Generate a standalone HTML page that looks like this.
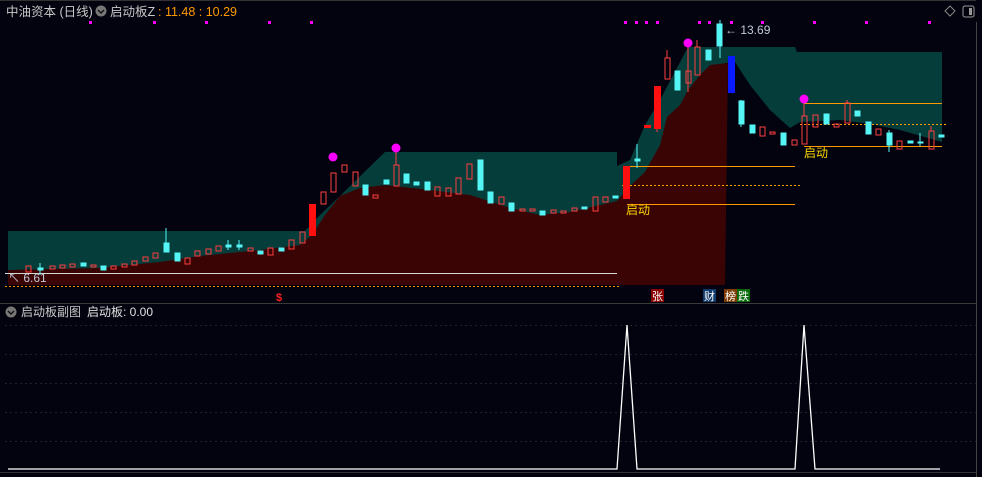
<!DOCTYPE html>
<html><head><meta charset="utf-8"><style>
body{margin:0;background:#03030f;width:982px;height:477px;overflow:hidden;font-family:"Liberation Sans","Noto Sans CJK SC",sans-serif}
svg{display:block}
text{font-family:"Liberation Sans","Noto Sans CJK SC",sans-serif}
</style></head><body>
<svg width="982" height="477" viewBox="0 0 982 477" xmlns="http://www.w3.org/2000/svg">
<rect width="982" height="477" fill="#03030f"/>
<path fill="#053d3b" d="M8 231 L305 231 L320 215 L340 196 L385 152 L617 152 L617 166 L630 160 L645 125 L660 100 L688 47 L795 47 L797 52 L942 52 L942 142 L900 130 L870 124 L840 120 L800 122 L790 128 L770 110 L750 85 L735 62 L725 63 L725 285 L8 285 Z"/>
<path fill="#3a0404" d="M8 270 L100 268 L160 262 L200 256 L260 250 L300 245 L312 235 L325 215 L340 196 L360 188 L385 185 L430 190 L470 195 L510 208 L540 215 L570 212 L600 205 L617 201 L630 186 L645 172 L660 145 L667 117 L680 105 L688 90 L700 75 L710 65 L728 63 L725 285 L8 285 Z"/>
<line x1="5" y1="273.5" x2="617" y2="273.5" stroke="#d8d8d8" stroke-width="1"/>
<line x1="5" y1="286.5" x2="620" y2="286.5" stroke="#ff8c00" stroke-dasharray="2,2"/>
<line x1="627" y1="166.5" x2="795" y2="166.5" stroke="#ff9900"/>
<line x1="622" y1="185.5" x2="800" y2="185.5" stroke="#ff9900" stroke-dasharray="2,2"/>
<line x1="627" y1="204.5" x2="795" y2="204.5" stroke="#ff9900"/>
<line x1="804" y1="103.5" x2="942" y2="103.5" stroke="#ff9900"/>
<line x1="800" y1="124.5" x2="946" y2="124.5" stroke="#ff9900" stroke-dasharray="2,2"/>
<line x1="804" y1="146.5" x2="942" y2="146.5" stroke="#ff9900"/>
<g stroke-width="1">
<g stroke="#ff4040" fill="none">
<rect x="26" y="266" width="5" height="6"/><rect x="50" y="266" width="5" height="3"/><rect x="60" y="265" width="5" height="3"/><rect x="70" y="264" width="5" height="3"/><rect x="91" y="265" width="5" height="2"/><rect x="111" y="266" width="5" height="3"/><rect x="122" y="264" width="5" height="3"/><rect x="132" y="261" width="5" height="4"/><rect x="143" y="257" width="5" height="4"/><rect x="153" y="253" width="5" height="5"/><rect x="185" y="258" width="5" height="6"/><rect x="195" y="251" width="5" height="5"/><rect x="206" y="249" width="5" height="5"/><rect x="216" y="246" width="5" height="5"/><rect x="248" y="248" width="5" height="3"/><rect x="268" y="248" width="5" height="7"/><rect x="289" y="240" width="5" height="9"/><rect x="300" y="232" width="5" height="11"/><rect x="321" y="192" width="5" height="12"/><rect x="331" y="173" width="5" height="19"/><rect x="342" y="165" width="5" height="7"/><rect x="353" y="172" width="5" height="14"/><rect x="373" y="195" width="5" height="3"/><rect x="394" y="165" width="5" height="21"/><rect x="435" y="187" width="5" height="9"/><rect x="446" y="188" width="5" height="8"/><rect x="456" y="178" width="5" height="16"/><rect x="467" y="164" width="5" height="15"/><rect x="499" y="197" width="5" height="7"/><rect x="520" y="209" width="5" height="2"/><rect x="530" y="209" width="5" height="2"/><rect x="551" y="210" width="5" height="3"/><rect x="561" y="211" width="5" height="2"/><rect x="572" y="208" width="5" height="3"/><rect x="593" y="197" width="5" height="14"/><rect x="603" y="197" width="5" height="5"/><rect x="665" y="58" width="5" height="21"/><rect x="686" y="71" width="5" height="12"/><rect x="695" y="47" width="5" height="28"/><rect x="760" y="127" width="5" height="9"/><rect x="770" y="132" width="5" height="2"/><rect x="792" y="140" width="5" height="5"/><rect x="802" y="116" width="5" height="28"/><rect x="813" y="115" width="5" height="12"/><rect x="834" y="124" width="5" height="3"/><rect x="845" y="103" width="5" height="20"/><rect x="876" y="129" width="5" height="6"/><rect x="897" y="141" width="5" height="8"/><rect x="929" y="131" width="5" height="18"/>
<path d="M396 145V165M688 47V92M804 99V116M847 100V103M667 50V58M657 86V132M697 40V47M931 126V131"/>
</g>
<g fill="#55f5f5" stroke="#55f5f5">
<rect x="38" y="268" width="5" height="2"/><rect x="81" y="263" width="5" height="3"/><rect x="101" y="266" width="5" height="4"/><rect x="164" y="243" width="5" height="9"/><rect x="175" y="253" width="5" height="8"/><rect x="226" y="245" width="5" height="2"/><rect x="237" y="245" width="5" height="2"/><rect x="258" y="251" width="5" height="3"/><rect x="279" y="248" width="5" height="3"/><rect x="363" y="185" width="5" height="10"/><rect x="384" y="180" width="5" height="4"/><rect x="404" y="174" width="5" height="9"/><rect x="414" y="182" width="5" height="3"/><rect x="425" y="182" width="5" height="8"/><rect x="478" y="160" width="5" height="30"/><rect x="488" y="192" width="5" height="11"/><rect x="509" y="203" width="5" height="8"/><rect x="540" y="211" width="5" height="4"/><rect x="582" y="207" width="5" height="2"/><rect x="613" y="196" width="5" height="2"/><rect x="635" y="159" width="5" height="2"/><rect x="675" y="71" width="5" height="19"/><rect x="706" y="50" width="5" height="10"/><rect x="717" y="24" width="5" height="22"/><rect x="739" y="101" width="5" height="23"/><rect x="750" y="125" width="5" height="8"/><rect x="781" y="133" width="5" height="12"/><rect x="824" y="114" width="5" height="10"/><rect x="855" y="111" width="5" height="5"/><rect x="866" y="122" width="5" height="12"/><rect x="887" y="133" width="5" height="12"/><rect x="908" y="141" width="5" height="2"/><rect x="918" y="142" width="5" height="1"/><rect x="939" y="135" width="5" height="2"/>
<path d="M166 228V243M637 144V168M720 20V58M741 100V127M228 240V250M239 240V250M40 263V275M889 130V152M920 133V146"/>
</g>
<rect x="309" y="204" width="7" height="32" fill="#ff1010"/>
<rect x="623" y="166" width="7" height="33" fill="#ff1010"/>
<rect x="654" y="86" width="7" height="43" fill="#ff1010"/>
<rect x="644" y="125" width="7" height="3" fill="#ff1010"/>
<rect x="728" y="56" width="7" height="37" fill="#0a1aff"/>
</g>
<g fill="#ff00ff">
<circle cx="333" cy="157" r="4.5"/><circle cx="396" cy="148" r="4.5"/><circle cx="688" cy="43" r="4.5"/><circle cx="804" cy="99" r="4.5"/>
<rect x="89" y="21" width="3" height="3"/><rect x="153" y="21" width="3" height="3"/><rect x="205" y="21" width="3" height="3"/><rect x="268" y="21" width="3" height="3"/><rect x="310" y="21" width="3" height="3"/><rect x="624" y="21" width="3" height="3"/><rect x="635" y="21" width="3" height="3"/><rect x="645" y="21" width="3" height="3"/><rect x="656" y="21" width="3" height="3"/><rect x="698" y="21" width="3" height="3"/><rect x="708" y="21" width="3" height="3"/><rect x="730" y="21" width="3" height="3"/><rect x="761" y="21" width="3" height="3"/><rect x="813" y="21" width="3" height="3"/><rect x="865" y="21" width="3" height="3"/><rect x="928" y="21" width="3" height="3"/>
</g>
<text x="626" y="214" fill="#ffd700" font-size="12">启动</text>
<text x="804" y="157" fill="#ffd700" font-size="12">启动</text>
<text x="725" y="34" fill="#c0c8d8" font-size="12">← 13.69</text>
<text x="8" y="282" fill="#c0c8d8" font-size="12">↖ 6.61</text>
<text x="276" y="301" fill="#ff2020" font-size="11" font-weight="bold">$</text>
<rect x="651" y="289" width="13" height="13" fill="#8b0000"/><text x="652" y="300" fill="#fff" font-size="11">张</text>
<rect x="703" y="289" width="13" height="13" fill="#103a6a"/><text x="704" y="300" fill="#fff" font-size="11">财</text>
<rect x="724" y="289" width="13" height="13" fill="#7a3a00"/><text x="725" y="300" fill="#fff" font-size="11">榜</text>
<rect x="737" y="289" width="13" height="13" fill="#0a6a0a"/><text x="738" y="300" fill="#fff" font-size="11">跌</text>
<text x="6" y="16" fill="#c8c8c8" font-size="12.5">中油资本 (日线)</text>
<circle cx="101" cy="11" r="5.5" fill="#777"/><path d="M98 10l3 3 3-3" stroke="#111" stroke-width="1.4" fill="none"/>
<text x="110" y="16" fill="#c8c8c8" font-size="12.5">启动板Z</text>
<text x="158" y="16" fill="#ff9900" font-size="12.5">: 11.48 : 10.29</text>
<path d="M950 6l5 5-5 5-5-5z" stroke="#888" fill="none"/>
<rect x="963" y="6" width="11" height="11" rx="2" stroke="#999" fill="none"/><rect x="969" y="8" width="3" height="7" fill="#999"/>
<line x1="976.5" y1="22" x2="976.5" y2="477" stroke="#444"/>
<line x1="0" y1="0.5" x2="976" y2="0.5" stroke="#333"/>
<line x1="0" y1="303.5" x2="976" y2="303.5" stroke="#3a3a3a"/>
<circle cx="11" cy="312" r="5.5" fill="#777"/><path d="M8 311l3 3 3-3" stroke="#111" stroke-width="1.4" fill="none"/>
<text x="21" y="316" fill="#c8c8c8" font-size="12">启动板副图</text>
<text x="87" y="316" fill="#e0e0e0" font-size="12">启动板: 0.00</text>
<g stroke="#222" stroke-dasharray="2,3">
<line x1="5" y1="325.5" x2="976" y2="325.5"/><line x1="5" y1="354.5" x2="976" y2="354.5"/><line x1="5" y1="383.5" x2="976" y2="383.5"/><line x1="5" y1="412.5" x2="976" y2="412.5"/><line x1="5" y1="441.5" x2="976" y2="441.5"/>
</g>
<path d="M8 469 L617 469 L627 325 L637 469 L795 469 L804 325 L815 469 L940 469" stroke="#fff" stroke-width="1.3" fill="none"/>
<line x1="0" y1="472.5" x2="976" y2="472.5" stroke="#333"/>
</svg>
</body></html>
